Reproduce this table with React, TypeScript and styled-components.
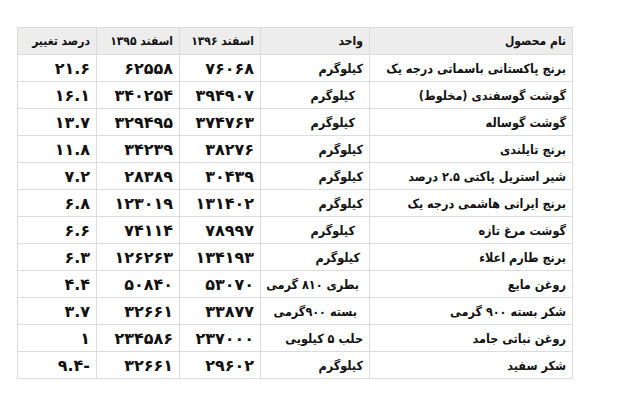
import React from 'react';
import styled, { createGlobalStyle } from 'styled-components';

const GlobalStyle = createGlobalStyle`
  html, body {
    margin: 0;
    padding: 0;
    background: #fff;
  }
  *, *::before, *::after {
    box-sizing: border-box;
  }
`;

const Page = styled.div`
  padding: 27px 0 0 17px;
`;

const PriceTable = styled.table`
  direction: rtl;
  border-collapse: collapse;
  width: 555px;
  table-layout: fixed;
  font-family: "DejaVu Sans Condensed", "DejaVu Sans", sans-serif;
  font-size: 12px;
  font-weight: bold;
  color: #111;
`;

const HeadCell = styled.th<{ $w: number }>`
  width: ${props => props.$w}px;
  height: 27px;
  padding: 0 6px;
  text-align: right;
  white-space: nowrap;
  font-weight: bold;
  background: #ededed;
  border: 1px solid #dcdcdc;
`;

const Cell = styled.td<{ $num?: boolean; $indent?: number }>`
  height: 27px;
  padding: 0 ${props => 6 + (props.$indent || 0)}px 0 4px;
  text-align: right;
  white-space: nowrap;
  overflow: hidden;
  font-family: ${props => (props.$num ? '"DejaVu Sans", sans-serif' : 'inherit')};
  font-size: ${props => (props.$num ? '16px' : '12.5px')};
  border: 1px solid #dcdcdc;
`;

type Row = {
  name: string;
  unit: string;
  indent?: number;
  y96: string;
  y95: string;
  change: string;
};

const columns = [
  { title: 'نام محصول', w: 203 },
  { title: 'واحد', w: 109 },
  { title: 'اسفند ۱۳۹۶', w: 81 },
  { title: 'اسفند ۱۳۹۵', w: 83 },
  { title: 'درصد تغییر', w: 79 },
];

const rows: Row[] = [
  { name: 'برنج پاکستانی باسماتی درجه یک', unit: 'کیلوگرم', y96: '۷۶۰۶۸', y95: '۶۲۵۵۸', change: '۲۱.۶' },
  { name: 'گوشت گوسفندی (مخلوط)', unit: 'کیلوگرم', indent: 8, y96: '۳۹۴۹۰۷', y95: '۳۴۰۲۵۴', change: '۱۶.۱' },
  { name: 'گوشت گوساله', unit: 'کیلوگرم', indent: 8, y96: '۳۷۴۷۶۳', y95: '۳۲۹۴۹۵', change: '۱۳.۷' },
  { name: 'برنج تایلندی', unit: 'کیلوگرم', y96: '۳۸۲۷۶', y95: '۳۴۲۳۹', change: '۱۱.۸' },
  { name: 'شیر استریل پاکتی ۲.۵ درصد', unit: 'کیلوگرم', y96: '۳۰۴۳۹', y95: '۲۸۳۸۹', change: '۷.۲' },
  { name: 'برنج ایرانی هاشمی درجه یک', unit: 'کیلوگرم', y96: '۱۳۱۴۰۲', y95: '۱۲۳۰۱۹', change: '۶.۸' },
  { name: 'گوشت مرغ تازه', unit: 'کیلوگرم', indent: 8, y96: '۷۸۹۹۷', y95: '۷۴۱۱۴', change: '۶.۶' },
  { name: 'برنج طارم اعلاء', unit: 'کیلوگرم', indent: 3, y96: '۱۳۴۱۹۳', y95: '۱۲۶۲۶۳', change: '۶.۳' },
  { name: 'روغن مایع', unit: 'بطری ۸۱۰ گرمی', indent: 4, y96: '۵۳۰۷۰', y95: '۵۰۸۴۰', change: '۴.۴' },
  { name: 'شکر بسته ۹۰۰ گرمی', unit: 'بسته ۹۰۰گرمی', indent: 6, y96: '۳۳۸۷۷', y95: '۳۲۶۶۱', change: '۳.۷' },
  { name: 'روغن نباتی جامد', unit: 'حلب ۵ کیلویی', y96: '۲۳۷۰۰۰', y95: '۲۳۴۵۸۶', change: '۱' },
  { name: 'شکر سفید', unit: 'کیلوگرم', y96: '۲۹۶۰۲', y95: '۳۲۶۶۱', change: '-۹.۴' },
];

const App: React.FC = () => {
  return (
    <Page>
      <GlobalStyle />
      <PriceTable>
        <thead>
          <tr>
            {columns.map(c => (
              <HeadCell key={c.title} $w={c.w}>{c.title}</HeadCell>
            ))}
          </tr>
        </thead>
        <tbody>
          {rows.map(r => (
            <tr key={r.name}>
              <Cell>{r.name}</Cell>
              <Cell $indent={r.indent}>{r.unit}</Cell>
              <Cell $num>{r.y96}</Cell>
              <Cell $num>{r.y95}</Cell>
              <Cell $num>{r.change}</Cell>
            </tr>
          ))}
        </tbody>
      </PriceTable>
    </Page>
  );
};

export default App;
